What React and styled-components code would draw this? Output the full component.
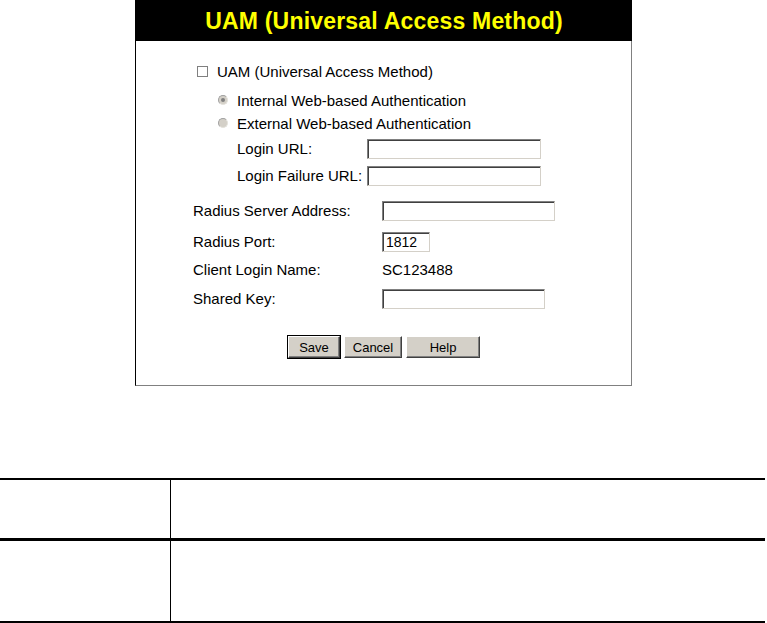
import React from "react";
import styled, { createGlobalStyle } from "styled-components";

const GlobalStyle = createGlobalStyle`
  html, body {
    margin: 0;
    padding: 0;
    background: #ffffff;
  }
  body {
    font-family: "Liberation Sans", Arial, sans-serif;
    color: #000000;
  }
`;

const Page = styled.div`
  width: 767px;
  display: flex;
  flex-direction: column;
`;

const Panel = styled.div`
  width: 497px;
  margin-left: 135px;
  border-left: 1px solid #000000;
  border-right: 1px solid #808080;
  border-bottom: 1px solid #808080;
  box-sizing: border-box;
`;

const Header = styled.div`
  height: 41px;
  background: #000000;
  margin-right: -1px;
  display: flex;
  align-items: center;
  justify-content: center;
  color: #ffff00;
  font-weight: bold;
  font-size: 23px;
  letter-spacing: 0.2px;
  padding-top: 2px;
  box-sizing: border-box;
`;

const Body = styled.div`
  padding: 20px 0 27px 57px;
  font-size: 15px;
  display: flex;
  flex-direction: column;
`;

const Row = styled.div`
  display: flex;
  align-items: center;
  height: ${(p) => p.$h || 23}px;
  padding-left: ${(p) => p.$indent || 0}px;
`;

const Check = styled.span`
  width: 9px;
  height: 9px;
  border: 1px solid #808080;
  background: #ffffff;
  margin-right: 9px;
  flex-shrink: 0;
`;

const Radio = styled.span`
  width: 10px;
  height: 10px;
  border-radius: 50%;
  box-sizing: border-box;
  border: 1px solid;
  border-color: #a0a0a0 #e4e2dc #e4e2dc #a0a0a0;
  background: #d4d0c8;
  margin-right: 9px;
  flex-shrink: 0;
  display: flex;
  align-items: center;
  justify-content: center;

  &::after {
    content: "";
    width: 4px;
    height: 4px;
    border-radius: 50%;
    background: ${(p) => (p.$on ? "#808080" : "transparent")};
  }
`;

const Label = styled.span`
  width: ${(p) => p.$w}px;
  flex-shrink: 0;
`;

const Field = styled.input`
  width: ${(p) => p.$w}px;
  height: 20px;
  box-sizing: border-box;
  border: 1px solid;
  border-color: #808080 #d4d0c8 #d4d0c8 #808080;
  box-shadow: inset 1px 1px 0 #404040;
  padding: 1px 3px 0;
  font-family: "Liberation Sans", Arial, sans-serif;
  font-size: 14px;
  color: #000000;
  background: #ffffff;
  outline: none;
`;

const Spacer = styled.div`
  height: ${(p) => p.$h}px;
`;

const Buttons = styled.div`
  display: flex;
  gap: 4px;
  padding-left: 95px;
`;

const Button = styled.button`
  width: ${(p) => p.$w}px;
  height: 22px;
  box-sizing: border-box;
  background: #d4d0c8;
  font-family: "Liberation Sans", Arial, sans-serif;
  font-size: 13px;
  color: #000000;
  padding: 0;
  border: 1px solid;
  border-color: #ffffff #404040 #404040 #ffffff;
  box-shadow: inset -1px -1px 0 #808080;
  outline: ${(p) => (p.$default ? "1px solid #000000" : "none")};
  outline-offset: 0;
`;

const InfoTable = styled.table`
  width: 765px;
  margin-top: 92px;
  border-collapse: collapse;

  td {
    padding: 0;
  }
`;

const Cell = styled.td`
  height: ${(p) => p.$h}px;
  width: ${(p) => (p.$first ? "170px" : "auto")};
  border-top: ${(p) => p.$top}px solid #000000;
  border-bottom: ${(p) => p.$bottom || 0}px solid #000000;
  border-right: ${(p) => (p.$first ? "1px solid #000000" : "none")};
`;

export default function App() {
  return (
    <Page>
      <GlobalStyle />
      <Panel>
        <Header>UAM (Universal Access Method)</Header>
        <Body>
          <Row $indent={4} $h={20}>
            <Check />
            UAM (Universal Access Method)
          </Row>
          <Spacer $h={8} />
          <Row $indent={25} $h={22}>
            <Radio $on />
            Internal Web-based Authentication
          </Row>
          <Row $indent={25} $h={24}>
            <Radio />
            External Web-based Authentication
          </Row>
          <Row $indent={44} $h={27}>
            <Label $w={130}>Login URL:</Label>
            <Field $w={174} />
          </Row>
          <Row $indent={44} $h={27}>
            <Label $w={130}>Login Failure URL:</Label>
            <Field $w={174} />
          </Row>
          <Spacer $h={6} />
          <Row $h={31}>
            <Label $w={189}>Radius Server Address:</Label>
            <Field $w={173} />
          </Row>
          <Row $h={31}>
            <Label $w={189}>Radius Port:</Label>
            <Field $w={48} defaultValue="1812" />
          </Row>
          <Row $h={25}>
            <Label $w={189}>Client Login Name:</Label>
            SC123488
          </Row>
          <Row $h={33}>
            <Label $w={189}>Shared Key:</Label>
            <Field $w={163} />
          </Row>
          <Spacer $h={21} />
          <Buttons>
            <Button $w={52} $default>Save</Button>
            <Button $w={58}>Cancel</Button>
            <Button $w={74}>Help</Button>
          </Buttons>
        </Body>
      </Panel>
      <InfoTable>
        <tbody>
          <tr>
            <Cell $first $top={2} $h={58} />
            <Cell $top={2} />
          </tr>
          <tr>
            <Cell $first $top={3} $bottom={2} $h={80} />
            <Cell $top={3} $bottom={2} />
          </tr>
        </tbody>
      </InfoTable>
    </Page>
  );
}
